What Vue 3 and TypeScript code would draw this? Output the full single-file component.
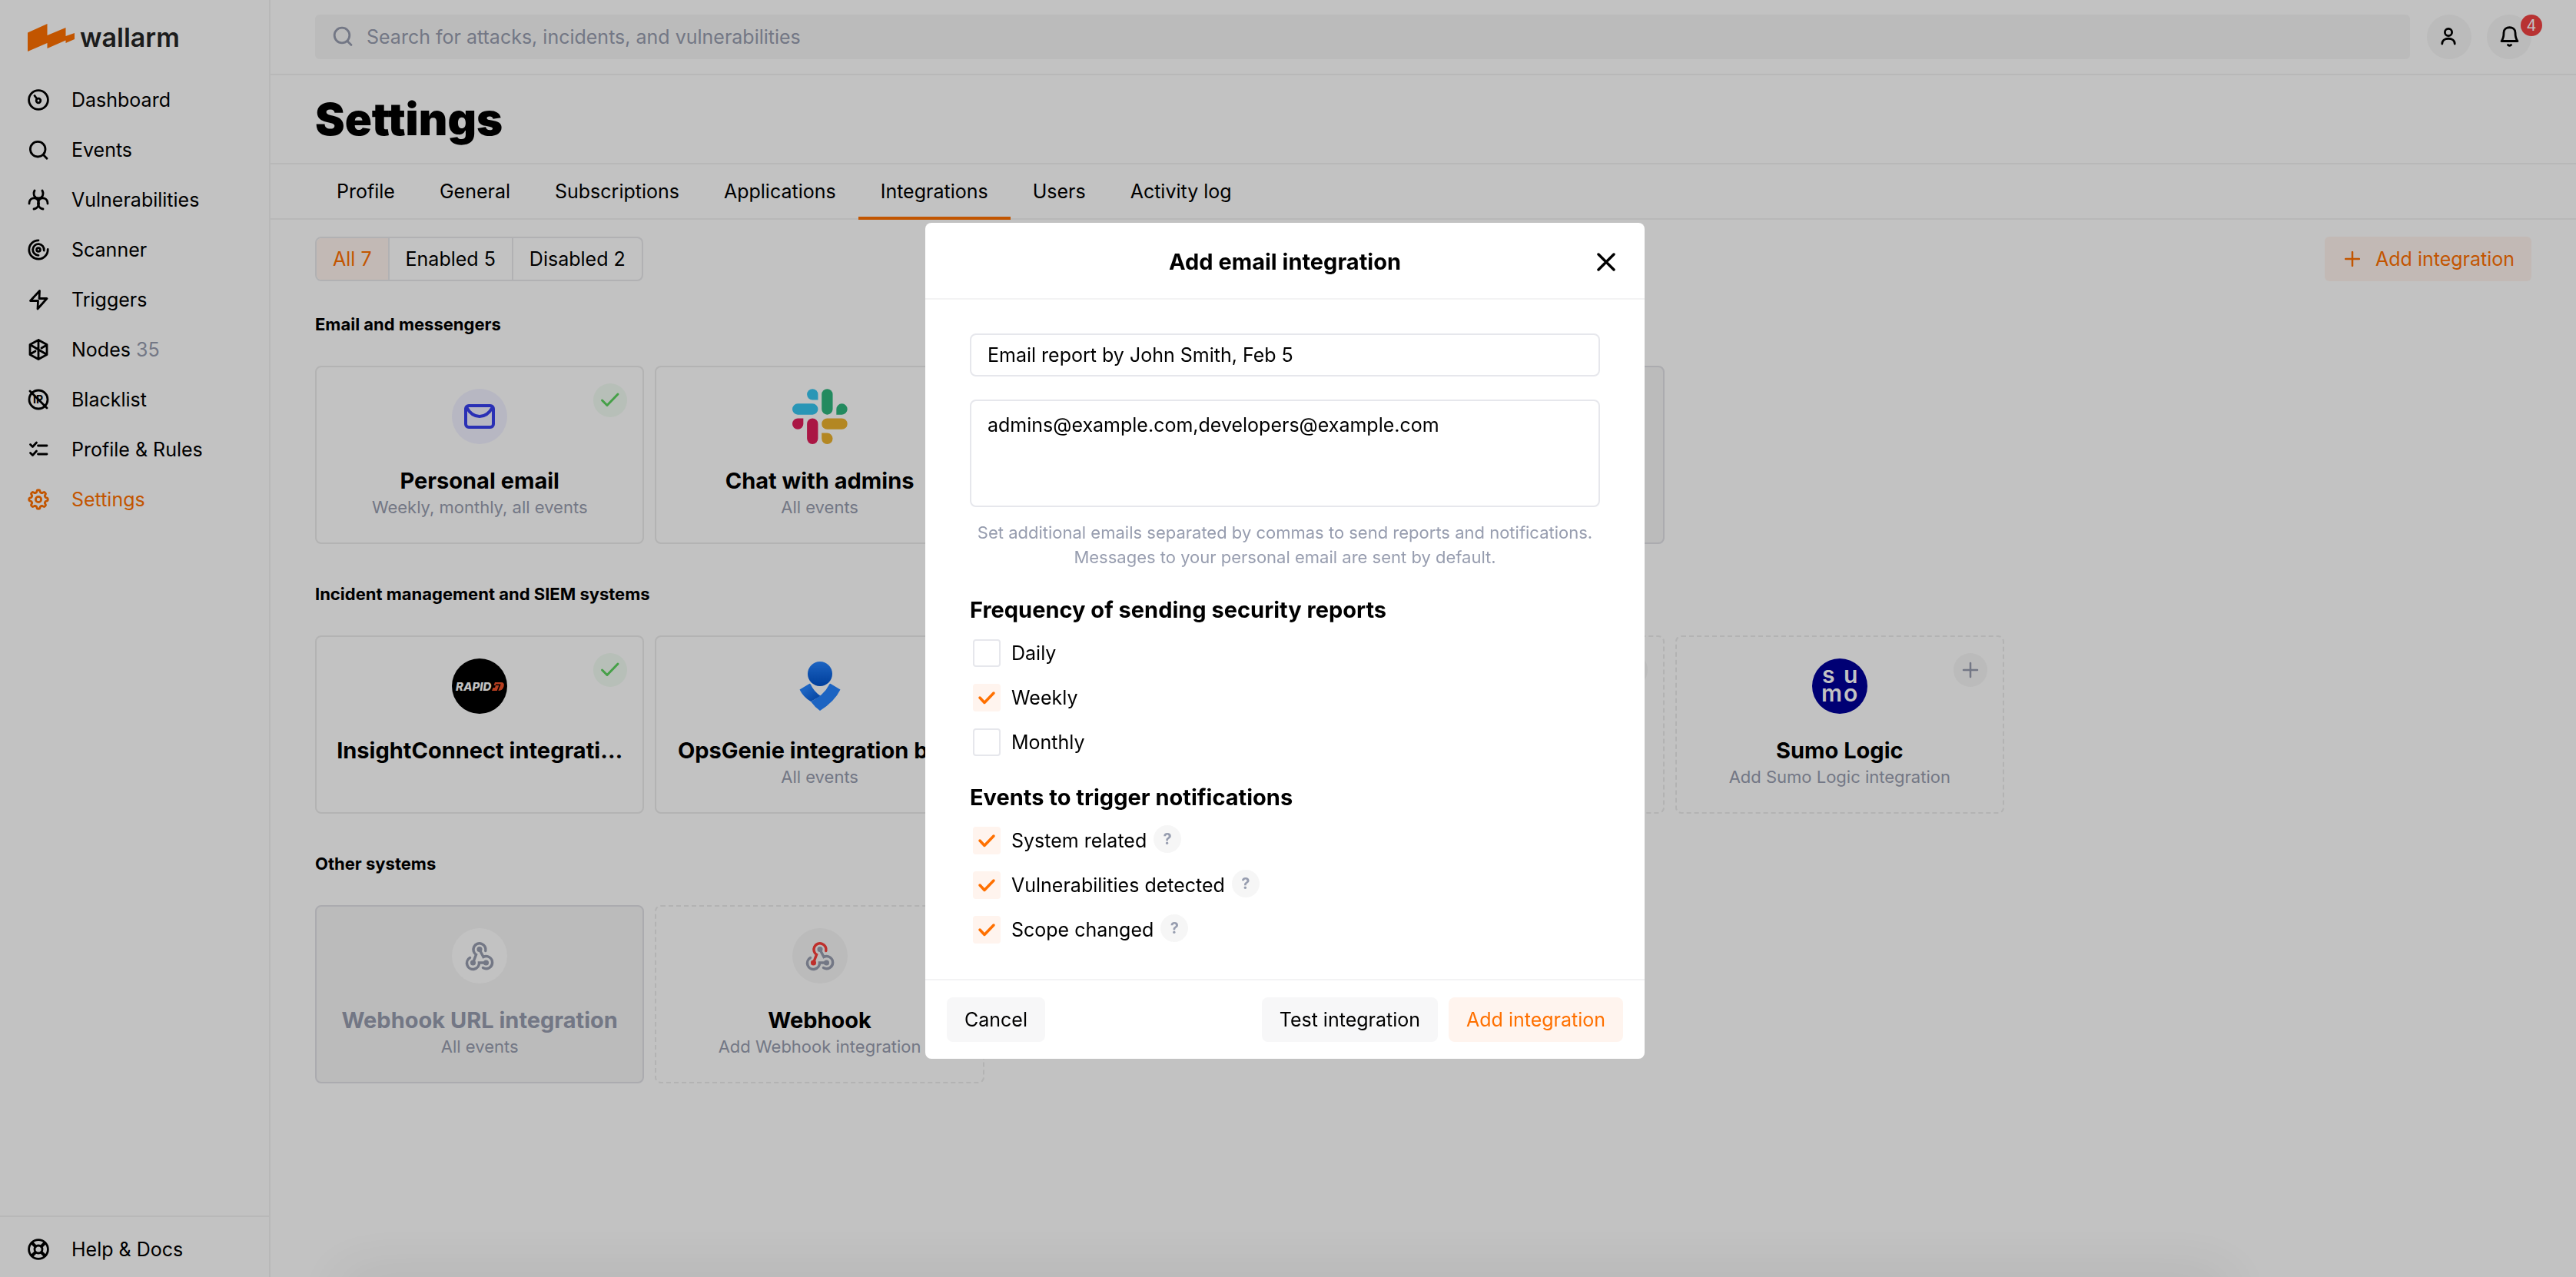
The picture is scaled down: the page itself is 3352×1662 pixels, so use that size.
<script setup lang="ts">
import { ref } from 'vue'

interface NavItem { icon: string; label: string; count?: number; active?: boolean }
interface Card {
  logo?: string
  title?: string
  note?: string
  state: 'enabled' | 'disabled' | 'available'
  badge?: 'check' | 'plus'
}
interface Section { title: string; cards: Card[] }
interface Option { id: string; label: string; checked: boolean }

const nav: NavItem[] = [
  { icon: 'dashboard', label: 'Dashboard' },
  { icon: 'search', label: 'Events' },
  { icon: 'hazard', label: 'Vulnerabilities' },
  { icon: 'scanner', label: 'Scanner' },
  { icon: 'zap', label: 'Triggers' },
  { icon: 'nodes', label: 'Nodes', count: 35 },
  { icon: 'blacklist', label: 'Blacklist' },
  { icon: 'rules', label: 'Profile & Rules' },
  { icon: 'gear', label: 'Settings', active: true },
]

const tabs = ['Profile', 'General', 'Subscriptions', 'Applications', 'Integrations', 'Users', 'Activity log']
const filters = ['All 7', 'Enabled 5', 'Disabled 2']

const sections: Section[] = [
  {
    title: 'Email and messengers',
    cards: [
      { logo: 'mail', title: 'Personal email', note: 'Weekly, monthly, all events', state: 'enabled', badge: 'check' },
      { logo: 'slack', title: 'Chat with admins', note: 'All events', state: 'enabled' },
      { state: 'enabled' },
      { state: 'disabled' },
    ],
  },
  {
    title: 'Incident management and SIEM systems',
    cards: [
      { logo: 'rapid', title: 'InsightConnect integrati…', state: 'enabled', badge: 'check' },
      { logo: 'opsgenie', title: 'OpsGenie integration by…', note: 'All events', state: 'enabled' },
      { state: 'available' },
      { state: 'available', badge: 'plus' },
      { logo: 'sumo', title: 'Sumo Logic', note: 'Add Sumo Logic integration', state: 'available', badge: 'plus' },
    ],
  },
  {
    title: 'Other systems',
    cards: [
      { logo: 'webhook', title: 'Webhook URL integration', note: 'All events', state: 'disabled' },
      { logo: 'webhook', title: 'Webhook', note: 'Add Webhook integration', state: 'available' },
    ],
  },
]

const name = ref('Email report by John Smith, Feb 5')
const emails = ref('admins@example.com,developers@example.com')
const frequency = ref<Option[]>([
  { id: 'daily', label: 'Daily', checked: false },
  { id: 'weekly', label: 'Weekly', checked: true },
  { id: 'monthly', label: 'Monthly', checked: false },
])
const events = ref<Option[]>([
  { id: 'system', label: 'System related', checked: true },
  { id: 'vulns', label: 'Vulnerabilities detected', checked: true },
  { id: 'scope', label: 'Scope changed', checked: true },
])

// Eight-toothed wavy outline of the settings gear.
const gearPath = Array.from({ length: 96 }, (_, i) => {
  const a = (i / 96) * Math.PI * 2
  const r = 10.8 + 1.5 * Math.tanh(2.2 * Math.cos(8 * a))
  return `${i ? 'L' : 'M'}${(16 + r * Math.sin(a)).toFixed(2)} ${(16 - r * Math.cos(a)).toFixed(2)}`
}).join('') + 'Z'
</script>

<template>
  <div class="app">
    <aside class="sidebar">
      <a class="brand" href="#">
        <svg width="62" height="36" viewBox="0 0 62 36" aria-hidden="true">
          <path fill="#ff7000" d="M0 11.500 25.500 0V15L49.500 5V16L61 12V20L49.500 25V21.500L25.500 32V25L0 36Z" />
        </svg>
        <span>wallarm</span>
      </a>
      <nav class="nav">
        <a v-for="n in nav" :key="n.label" href="#" class="nav-item" :class="{ active: n.active }">
          <svg class="ico" viewBox="0 0 32 32" aria-hidden="true">
            <template v-if="n.icon === 'dashboard'">
              <circle cx="16" cy="16" r="12.400" /><circle cx="16" cy="17" r="2.800" /><path d="M14 14.500 11 10.500" />
            </template>
            <template v-else-if="n.icon === 'search'">
              <circle cx="15.200" cy="15.200" r="9.800" /><path d="m22.200 22.200 4.800 5" />
            </template>
            <template v-else-if="n.icon === 'hazard'">
              <path d="M11 4c-2 4-1 10 5 10s7-6 5-10" />
              <path d="M4 21c0-7 7-9 10.500-5.500S17 27 10 28" />
              <path d="M28 21c0-7-7-9-10.500-5.500S15 27 22 28" />
            </template>
            <template v-else-if="n.icon === 'scanner'">
              <path d="M16 3.800A12.200 12.200 0 1 0 28.200 15.500" /><path d="M23.200 17A7.300 7.300 0 1 0 16 23.300" />
              <circle cx="16" cy="16" r="2.400" />
            </template>
            <template v-else-if="n.icon === 'zap'">
              <path d="M17.500 4.500 5.500 17.500H15.500L15 28 27 14.500H17Z" />
            </template>
            <template v-else-if="n.icon === 'nodes'">
              <path d="M16 3.500 27 9.500V22.500L16 28.500 5 22.500V9.500ZM16 3.500V28.500M5 9.500 27 22.500M26 10.500 20 14M6 21.500 12 18" />
            </template>
            <template v-else-if="n.icon === 'blacklist'">
              <circle cx="16" cy="16" r="12" /><path d="m5 5 22 22" />
              <text x="9" y="21" font-size="14" font-weight="700" fill="currentColor" stroke="none">IP</text>
            </template>
            <template v-else-if="n.icon === 'rules'">
              <path d="m5.500 9.500 3 3 5-5.500M15.500 11H27M5.500 20.500l3 3 5-5.500M15.500 22H27" />
            </template>
            <template v-else>
              <path :d="gearPath" /><circle cx="16" cy="16" r="3.600" />
            </template>
          </svg>
          <span>{{ n.label }}<span v-if="n.count" class="count">&nbsp;{{ n.count }}</span></span>
        </a>
      </nav>
      <a class="nav-item help-link" href="#">
        <svg class="ico" viewBox="0 0 32 32" aria-hidden="true">
          <circle cx="16" cy="16" r="12.400" /><circle cx="16" cy="16" r="5" />
          <path stroke-width="4" d="m8 8 4 4M20 20l4 4M24 8l-4 4M12 20l-4 4" />
        </svg>
        <span>Help &amp; Docs</span>
      </a>
    </aside>

    <main class="main">
      <header class="topbar">
        <label class="search">
          <svg class="ico" viewBox="0 0 32 32" aria-hidden="true">
            <circle cx="15" cy="14" r="9.800" /><path d="m22 21.500 5 5" />
          </svg>
          <input type="search" aria-label="Search" placeholder="Search for attacks, incidents, and vulnerabilities">
        </label>
        <button class="round" aria-label="Account">
          <svg class="ico" viewBox="0 0 32 32" aria-hidden="true">
            <circle cx="15" cy="10" r="4.600" /><path d="M6.800 25c0-9 16.400-9 16.400 0" />
          </svg>
        </button>
        <button class="round" aria-label="Notifications">
          <svg class="ico" viewBox="0 0 32 32" aria-hidden="true">
            <path d="M6 21.500c2-2.500 3-6 3-11 0-9 15-9 15 0 0 5 1 8.500 3 11Z" /><path d="M14.500 26.500q2 1.800 4 0" />
          </svg>
          <span class="notice">4</span>
        </button>
      </header>

      <div class="title-bar"><h1>Settings</h1></div>

      <nav class="tabs">
        <a v-for="t in tabs" :key="t" href="#" :class="{ current: t === 'Integrations' }">{{ t }}</a>
      </nav>

      <div class="content">
        <div class="toolbar">
          <div class="segments">
            <button v-for="(f, i) in filters" :key="f" :class="{ on: i === 0 }">{{ f }}</button>
          </div>
          <button class="add">
            <svg width="20" height="20" viewBox="0 0 20 20" aria-hidden="true">
              <path d="M10 1V19M1 10H19" stroke="currentColor" stroke-width="2.500" stroke-linecap="round" />
            </svg>
            Add integration
          </button>
        </div>

        <section v-for="s in sections" :key="s.title" class="group">
          <h2>{{ s.title }}</h2>
          <div class="cards">
            <article v-for="(c, i) in s.cards" :key="i" class="card" :class="c.state">
              <svg v-if="c.logo" class="logo" viewBox="0 0 72 72" aria-hidden="true">
                <template v-if="c.logo === 'mail'">
                  <circle cx="36" cy="36" r="36" fill="#f1f1ff" />
                  <g fill="none" stroke="#3840ee" stroke-width="4">
                    <rect x="18" y="22" width="36" height="28" rx="4" />
                    <path d="M19 24c9 16 25 16 34 0" />
                  </g>
                </template>
                <g v-else-if="c.logo === 'slack'" transform="scale(1.333)">
                  <path fill="#36C5F0" d="M19.712.133a5.381 5.381 0 0 0-5.376 5.387 5.381 5.381 0 0 0 5.376 5.386h5.376V5.520A5.381 5.381 0 0 0 19.712.133m0 14.365H5.376A5.381 5.381 0 0 0 0 19.884a5.381 5.381 0 0 0 5.376 5.387h14.336a5.381 5.381 0 0 0 5.376-5.387 5.381 5.381 0 0 0-5.376-5.386" />
                  <path fill="#2EB67D" d="M53.760 19.884a5.381 5.381 0 0 0-5.376-5.386 5.381 5.381 0 0 0-5.376 5.386v5.387h5.376a5.381 5.381 0 0 0 5.376-5.387m-14.336 0V5.520A5.381 5.381 0 0 0 34.048.133a5.381 5.381 0 0 0-5.376 5.387v14.364a5.381 5.381 0 0 0 5.376 5.387 5.381 5.381 0 0 0 5.376-5.387" />
                  <path fill="#ECB22E" d="M34.048 54a5.381 5.381 0 0 0 5.376-5.387 5.381 5.381 0 0 0-5.376-5.386h-5.376v5.386A5.381 5.381 0 0 0 34.048 54m0-14.365h14.336a5.381 5.381 0 0 0 5.376-5.386 5.381 5.381 0 0 0-5.376-5.387H34.048a5.381 5.381 0 0 0-5.376 5.387 5.381 5.381 0 0 0 5.376 5.386" />
                  <path fill="#E01E5A" d="M0 34.249a5.381 5.381 0 0 0 5.376 5.386 5.381 5.381 0 0 0 5.376-5.386v-5.387H5.376A5.381 5.381 0 0 0 0 34.250m14.336-.001v14.364A5.381 5.381 0 0 0 19.712 54a5.381 5.381 0 0 0 5.376-5.387V34.250a5.381 5.381 0 0 0-5.376-5.387 5.381 5.381 0 0 0-5.376 5.387" />
                </g>
                <template v-else-if="c.logo === 'rapid'">
                  <circle cx="36" cy="36" r="36" fill="#000" />
                  <text x="5" y="42" font-size="15" font-weight="800" font-style="italic" fill="#fff">RAPID</text>
                  <path fill="#f0522a" d="M56 31h8q5 0 3.500 5.500T60 42h-8l1.500-4H56l1-3h-2.500Z" />
                  <path fill="none" stroke="#000" stroke-width="1.600" d="M57 34.200h5.500L59.500 42" />
                </template>
                <template v-else-if="c.logo === 'opsgenie'">
                  <defs>
                    <linearGradient id="head" x1="0" y1="0" x2="0" y2="1">
                      <stop offset="0" stop-color="#2684ff" /><stop offset="1" stop-color="#0052cc" />
                    </linearGradient>
                    <linearGradient id="arm" x1="0" y1="0" x2="1" y2="1">
                      <stop offset="0.300" stop-color="#2684ff" /><stop offset="1" stop-color="#0052cc" />
                    </linearGradient>
                  </defs>
                  <circle cx="36" cy="20" r="16" fill="url(#head)" />
                  <path fill="url(#arm)" d="M9.500 40.500 22 33q1-1 2 1 4 9 13 15L24 56Q14 50 9.500 40.500Z" />
                  <path fill="#2684ff" d="M62.500 40.500 50 33q-1-1-2 1-7 14-24 22 5 7 12 12Q55 56 62.500 40.500Z" />
                </template>
                <template v-else-if="c.logo === 'sumo'">
                  <circle cx="36" cy="36" r="36" fill="#009" />
                  <text fill="#fff" font-size="30" font-weight="600" x="13 29 41" y="32">s u<tspan x="12 41" y="56">mo</tspan></text>
                </template>
                <template v-else>
                  <circle cx="36" cy="36" r="36" :fill="c.state === 'disabled' ? '#fff' : '#f6f6f6'" />
                  <g fill="none" stroke="#979daf" stroke-width="3.500" stroke-linecap="round" transform="translate(18 18)">
                    <path d="M18 10 23 19.500A8 8 0 1 1 22.500 33.500" />
                    <path d="M26.500 27H17.500A8 8 0 1 1 5.500 20.500" />
                    <g :stroke="c.state === 'disabled' ? '#979daf' : '#fa3f3a'">
                      <path d="M25.800 11.500A8 8 0 1 0 13.500 16.500L9.500 27" />
                      <circle cx="9.500" cy="27" r="1.800" />
                    </g>
                    <circle cx="18" cy="9.500" r="1.800" /><circle cx="26.500" cy="27" r="1.800" />
                  </g>
                </template>
              </svg>
              <h3 v-if="c.title">{{ c.title }}</h3>
              <p v-if="c.note">{{ c.note }}</p>
              <span v-if="c.badge" class="badge" :class="c.badge">
                <svg width="44" height="44" viewBox="0 0 44 44" aria-hidden="true">
                  <path v-if="c.badge === 'check'" d="m11.500 22 6.500 6.500L32 14" />
                  <path v-else d="M22 13V31M13 22H31" />
                </svg>
              </span>
            </article>
          </div>
        </section>
      </div>
    </main>

    <div class="overlay">
      <div class="sheet-shadow" />
      <form class="dialog" role="dialog" aria-modal="true" aria-labelledby="dialog-title" @submit.prevent>
        <header class="dialog-head">
          <h2 id="dialog-title">Add email integration</h2>
          <button type="button" class="close" aria-label="Close">
            <svg width="24" height="24" viewBox="0 0 24 24" aria-hidden="true">
              <path d="m2 2 20 20M22 2 2 22" stroke="#000" stroke-width="3.500" stroke-linecap="round" />
            </svg>
          </button>
        </header>
        <div class="dialog-body">
          <input v-model="name" class="field" type="text" aria-label="Integration name">
          <textarea v-model="emails" class="field area" aria-label="Additional emails" spellcheck="false" />
          <p class="tip">Set additional emails separated by commas to send reports and notifications. Messages to your personal email are sent by default.</p>
          <fieldset>
            <legend>Frequency of sending security reports</legend>
            <div v-for="o in frequency" :key="o.id" class="option">
              <input :id="o.id" v-model="o.checked" type="checkbox">
              <label :for="o.id">{{ o.label }}</label>
            </div>
          </fieldset>
          <fieldset>
            <legend>Events to trigger notifications</legend>
            <div v-for="o in events" :key="o.id" class="option">
              <input :id="o.id" v-model="o.checked" type="checkbox">
              <label :for="o.id">{{ o.label }}</label>
              <button type="button" class="hint" :aria-label="`About ${o.label}`">?</button>
            </div>
          </fieldset>
        </div>
        <footer class="dialog-foot">
          <button type="button" class="btn cancel">Cancel</button>
          <button type="button" class="btn">Test integration</button>
          <button type="submit" class="btn primary">Add integration</button>
        </footer>
      </form>
    </div>
  </div>
</template>

<style>
body { margin: 0; background: #fff; }
</style>

<style scoped>
.app, .app * { box-sizing: border-box; }
.app {
  display: flex;
  min-height: 100vh;
  font: 400 25px/36px Inter, "Liberation Sans", sans-serif;
  color: #000;
}
button, input, textarea { font: inherit; color: inherit; border: 0; margin: 0; padding: 0; background: none; outline: none; }
a { color: inherit; text-decoration: none; }
h1, h2, h3, p { margin: 0; }
.ico {
  width: 32px; height: 32px; flex: none;
  fill: none; stroke: currentColor; stroke-width: 2.8; stroke-linecap: round; stroke-linejoin: round;
}

.sidebar { width: 352px; flex: none; display: flex; flex-direction: column; border-right: 2px solid #f2f2f2; }
.brand { display: flex; align-items: center; gap: 6px; height: 97px; padding: 0 36px; font-size: 34px; font-weight: 600; color: #252525; }
.nav { flex: 1; }
.nav-item { display: flex; align-items: center; gap: 27px; height: 65px; padding: 0 34px; }
.nav-item.active { color: #ff7000; }
.count { color: #979daf; }
.help-link { height: 80px; border-top: 2px solid #f2f2f2; padding-top: 6px; }

.main { flex: 1; min-width: 0; }
.topbar { display: flex; align-items: center; height: 98px; padding: 0 58px; border-bottom: 2px solid #f2f2f2; }
.search { flex: 1; display: flex; align-items: center; gap: 15px; height: 58px; margin-right: 22px; padding: 0 20px; border-radius: 6px; background: #f6f6f6; color: #979daf; }
.search input { flex: 1; min-width: 0; }
.search input::placeholder { color: #979daf; opacity: 1; }
.round { position: relative; display: flex; align-items: center; justify-content: center; width: 58px; height: 58px; border-radius: 50%; background: #f6f6f6; }
.round + .round { margin-left: 20px; }
.notice { position: absolute; right: -14px; top: 0; width: 28px; height: 28px; border-radius: 50%; background: #f24242; color: #fff; font-size: 20px; line-height: 28px; text-align: center; }
.title-bar { display: flex; align-items: center; height: 116px; padding: 0 58px; border-bottom: 2px solid #f2f2f2; }
h1 { font-size: 58px; line-height: 64px; font-weight: 900; }
.tabs { display: flex; height: 72px; padding: 0 57px; border-bottom: 2px solid #f2f2f2; }
.tabs a { height: 72px; padding: 0 29px; line-height: 70px; }
.tabs .current { border-bottom: 4px solid #ff7000; }

.content { padding: 22px 58px; }
.toolbar { display: flex; justify-content: space-between; }
.segments { display: flex; height: 58px; border: 2px solid #e9e9ec; border-radius: 8px; overflow: hidden; }
.segments button { padding: 0 21px; border-right: 2px solid #e9e9ec; }
.segments button:last-child { border-right: 0; }
.segments .on { background: #fff4ee; color: #ff7000; }
.add { display: flex; align-items: center; gap: 20px; height: 58px; padding: 0 22px 0 26px; border-radius: 6px; background: #fff4ee; color: #ff7000; }

.group { padding-top: 40px; }
.group + .group { padding-top: 49px; }
.group h2 { height: 70px; font-size: 22px; line-height: 32px; font-weight: 700; }
.cards { display: grid; grid-template-columns: repeat(5, 1fr); gap: 14px; max-width: 2198px; }
.card { position: relative; display: flex; flex-direction: column; align-items: center; height: 232px; padding-top: 28px; border: 2px solid #ebebeb; border-radius: 8px; }
.card.available { border-style: dashed; }
.card.disabled { background: #f6f6f6; border-color: #e1e1e6; }
.logo { width: 72px; height: 72px; margin-bottom: 30px; }
.card h3 { font-size: 29px; line-height: 36px; font-weight: 700; white-space: nowrap; }
.card p { font-size: 22px; line-height: 32px; color: #979daf; }
.card.disabled h3 { color: #979daf; }
.badge { position: absolute; top: 21px; right: 20px; width: 44px; height: 44px; border-radius: 50%; background: #f6f6f6; }
.badge svg { display: block; fill: none; stroke: #979daf; stroke-width: 2.5; stroke-linecap: round; stroke-linejoin: round; }
.badge.check { background: #f1fcf2; }
.badge.check svg { stroke: #5cd35f; stroke-width: 3; }

.overlay { position: fixed; inset: 0; display: flex; align-items: center; justify-content: center; padding: 6px 8px 0 0; overflow: hidden; background: rgba(0, 0, 0, .24); }
.sheet-shadow { position: absolute; left: 440px; right: 448px; bottom: -40px; height: 40px; box-shadow: 0 0 80px rgba(0, 0, 0, .12), 0 0 160px rgba(0, 0, 0, .02); }
.dialog { position: relative; width: 936px; background: #fff; border-radius: 8px; }
.dialog-head { display: flex; align-items: center; justify-content: center; height: 100px; padding-top: 4px; border-bottom: 2px solid #f3f3f4; }
.dialog-head h2 { font-size: 29px; line-height: 36px; font-weight: 700; }
.close { position: absolute; top: 39px; right: 38px; display: flex; }
.dialog-body { padding: 44px 58px 35px; }
.field { display: block; width: 100%; height: 56px; padding: 0 21px; border: 2px solid #e6e7ec; border-radius: 8px; }
.area { height: 140px; margin-top: 30px; padding: 13px 21px; resize: none; overflow: hidden; }
.tip { margin-top: 17px; font-size: 22px; line-height: 32px; color: #979daf; text-align: center; }
fieldset { min-width: 0; margin: 34px 0 0; padding: 0; border: 0; }
fieldset + fieldset { margin-top: 24px; }
legend { padding: 1px 0 9px; font-size: 29px; line-height: 36px; font-weight: 700; }
.option { display: flex; align-items: center; height: 58px; padding-left: 4px; }
.option input { appearance: none; width: 36px; height: 36px; border: 2px solid #e6e7ec; border-radius: 4px; }
.option input:checked { border: 0; background: #fff4ee url("data:image/svg+xml,%3Csvg xmlns='http://www.w3.org/2000/svg' viewBox='0 0 36 36'%3E%3Cpath d='m9 18 6 6.500L27 12' fill='none' stroke='%23ff7000' stroke-width='3.500' stroke-linecap='round' stroke-linejoin='round'/%3E%3C/svg%3E"); }
.option label { padding-left: 14px; }
.hint { width: 36px; height: 36px; margin: 0 0 4px 9px; border-radius: 50%; background: #f6f6f6; color: #979daf; font-size: 20px; line-height: 36px; font-weight: 700; }
.dialog-foot { display: flex; gap: 14px; padding: 22px 28px; border-top: 2px solid #f3f3f4; }
.btn { height: 58px; padding: 0 23px; border-radius: 8px; background: #f7f7f8; }
.btn.cancel { margin-right: auto; }
.btn.primary { background: #fff4ee; color: #ff7000; }
</style>
